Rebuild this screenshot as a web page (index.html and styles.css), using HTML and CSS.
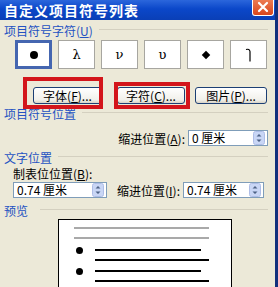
FILE: index.html
```html
<!DOCTYPE html>
<html lang="zh">
<head>
    <meta charset="UTF-8">
    <title>自定义项目符号列表</title>
    <link rel="stylesheet" href="styles.css">
</head>
<body>
    <div class="window">
        <div class="titlebar">
            <span class="title">自定义项目符号列表</span>
            <span class="close">
                <svg viewBox="0 0 20 15" width="20" height="15">
                    <path d="M6 3l8 8M14 3l-8 8" stroke="#fff" stroke-width="2.2" stroke-linecap="round"/>
                </svg>
            </span>
        </div>

        <div class="content">
            <div class="group-label"><span>项目符号字符(<u>U</u>)</span></div>

            <div class="bullets">
                <div class="bullet-box selected"><span class="dot"></span></div>
                <div class="bullet-box"><span class="glyph">λ</span></div>
                <div class="bullet-box"><span class="glyph">ν</span></div>
                <div class="bullet-box"><span class="glyph">υ</span></div>
                <div class="bullet-box"><span class="diamond"></span></div>
                <div class="bullet-box">
                    <svg viewBox="0 0 10 16" width="10" height="16">
                        <path d="M2 2.5q3.5-1 4 2v10" fill="none" stroke="#000" stroke-width="1.2"/>
                    </svg>
                </div>
            </div>

            <div class="button-row">
                <button class="btn btn-font">字体(<u>F</u>)...</button>
                <button class="btn btn-char">字符(<u>C</u>)...</button>
                <button class="btn btn-pic">图片(<u>P</u>)...</button>
                <span class="mark mark-font"></span>
                <span class="mark mark-char"></span>
            </div>

            <div class="group-label gl-pos"><span>项目符号位置</span></div>

            <div class="field-row row-a">
                <span class="field-label">缩进位置(<u>A</u>):</span>
                <div class="spin-input wide">
                    <span>0 厘米</span>
                    <svg class="spin" viewBox="0 0 12 14" width="12" height="14">
                        <rect x="0.5" y="0.5" width="11" height="13" rx="2" fill="#c9d6f5" stroke="#aebde6"/>
                        <path d="M3.5 5.5l2.5-2.5 2.5 2.5zM3.5 8.5l2.5 2.5 2.5-2.5z" fill="#4d6185"/>
                    </svg>
                </div>
            </div>

            <div class="group-label gl-text"><span>文字位置</span></div>
            <div class="sub-label">制表位位置(<u>B</u>):</div>

            <div class="field-row row-b">
                <div class="spin-input tab">
                    <span>0.74 厘米</span>
                    <svg class="spin" viewBox="0 0 12 14" width="12" height="14">
                        <rect x="0.5" y="0.5" width="11" height="13" rx="2" fill="#c9d6f5" stroke="#aebde6"/>
                        <path d="M3.5 5.5l2.5-2.5 2.5 2.5zM3.5 8.5l2.5 2.5 2.5-2.5z" fill="#4d6185"/>
                    </svg>
                </div>
                <span class="field-label">缩进位置(<u>I</u>):</span>
                <div class="spin-input indent">
                    <span>0.74 厘米</span>
                    <svg class="spin" viewBox="0 0 12 14" width="12" height="14">
                        <rect x="0.5" y="0.5" width="11" height="13" rx="2" fill="#c9d6f5" stroke="#aebde6"/>
                        <path d="M3.5 5.5l2.5-2.5 2.5 2.5zM3.5 8.5l2.5 2.5 2.5-2.5z" fill="#4d6185"/>
                    </svg>
                </div>
            </div>

            <div class="group-label gl-preview"><span>预览</span></div>

            <div class="preview">
                <div class="pv-rule"></div>
                <div class="pv-rule"></div>
                <div class="pv-item"><span class="pv-dot"></span><span class="pv-line"></span></div>
                <div class="pv-line long"></div>
                <div class="pv-item"><span class="pv-dot"></span><span class="pv-line"></span></div>
                <div class="pv-line long"></div>
            </div>
        </div>
    </div>
</body>
</html>
```

FILE: styles.css
```css
html, body {
    margin: 0;
    padding: 0;
    overflow: hidden;
}

body {
    width: 278px;
    height: 287px;
    background: #ece9d8;
    font-family: "Noto Sans CJK SC", "Liberation Sans", sans-serif;
    font-size: 12px;
    color: #000;
}

.window {
    width: 275px;
    height: 287px;
    border-right: 3px solid #12307c;
    background: #ece9d8;
    overflow: hidden;
}

.titlebar {
    height: 20px;
    display: flex;
    justify-content: space-between;
    align-items: flex-start;
    padding: 0 1px 0 4px;
    background: linear-gradient(#2b66dc, #0b47c9 45%, #0a3fb6);
}

.title {
    color: #fff;
    font-weight: bold;
    font-size: 14px;
    line-height: 20px;
    letter-spacing: 1px;
}

.close {
    width: 20px;
    height: 15px;
    border: 1px solid #fff;
    border-top: none;
    border-radius: 0 0 3px 3px;
    background: linear-gradient(#ec7a52, #d9461c);
    display: flex;
}

.content {
    padding: 0 7px 0 4px;
}

u {
    text-decoration: underline;
}

.group-label {
    display: flex;
    align-items: center;
    height: 12px;
    line-height: 12px;
    color: #2452c2;
    margin-top: 5px;
}

.group-label::after {
    content: "";
    flex: 1;
    height: 1px;
    margin-left: 6px;
    margin-top: -3px;
    background: #d4d0c0;
}

.bullets {
    display: flex;
    gap: 6px;
    margin-top: 3px;
    padding-left: 11px;
}

.bullet-box {
    width: 35px;
    height: 27px;
    background: #fff;
    border: 1px solid #a7a6a0;
    display: flex;
    align-items: center;
    justify-content: center;
}

.bullet-box.selected {
    width: 31px;
    height: 23px;
    border: 3px solid #4566b0;
}

.dot {
    width: 8px;
    height: 8px;
    border-radius: 50%;
    background: #000;
}

.glyph {
    font-family: "DejaVu Serif", serif;
    font-size: 13px;
    line-height: 13px;
}

.diamond {
    width: 6px;
    height: 6px;
    background: #000;
    transform: rotate(45deg);
}

.button-row {
    position: relative;
    display: flex;
    margin-top: 18px;
    padding-left: 29px;
}

.btn {
    height: 17px;
    padding: 0;
    border: 1px solid #1c3f74;
    border-radius: 3px;
    background: linear-gradient(#ffffff, #f1f0ea 80%, #d8d3c6);
    font-family: inherit;
    font-size: 12px;
    line-height: 14px;
    color: #000;
}

.btn-font {
    width: 69px;
}

.btn-char {
    width: 68px;
    margin-left: 15px;
}

.btn-pic {
    width: 72px;
    margin-left: 10px;
}

/* red annotation boxes drawn over the dialog */
.mark {
    position: absolute;
    border: 4px solid #d3151b;
    box-sizing: border-box;
}

.mark-font {
    left: 19px;
    top: -10px;
    width: 80px;
    height: 32px;
}

.mark-char {
    left: 110px;
    top: -5px;
    width: 76px;
    height: 27px;
}

.gl-pos {
    margin-top: 4px;
}

.field-row {
    display: flex;
    align-items: center;
    height: 16px;
}

.row-a {
    justify-content: flex-end;
    margin-top: 10px;
}

.field-label {
    white-space: nowrap;
}

.row-a .field-label {
    margin-right: 3px;
}

.spin-input {
    height: 14px;
    border: 1px solid #7f9db9;
    background: #fff;
    display: flex;
    align-items: center;
    justify-content: space-between;
    padding: 0 2px 0 3px;
    line-height: 14px;
}

.spin-input.wide {
    width: 73px;
}

.spin-input.tab {
    width: 87px;
    margin-left: 9px;
}

.spin-input.indent {
    width: 74px;
    margin-left: 3px;
}

.row-b .field-label {
    margin-left: 10px;
}

.gl-text {
    margin-top: 6px;
}

.sub-label {
    height: 12px;
    line-height: 12px;
    margin-top: 4px;
    padding-left: 9px;
}

.row-b {
    margin-top: 2px;
}

.gl-preview {
    margin-top: 7px;
}

.gl-preview::after {
    margin-left: 12px;
}

.preview {
    width: 157px;
    height: 80px;
    margin: 2px 0 0 54px;
    border: 1px solid #000;
    background: #fff;
    padding: 7px 0 0 15px;
}

.pv-rule {
    width: 135px;
    height: 2px;
    background: #a9a9a9;
    margin-bottom: 8px;
}

.pv-item {
    display: flex;
    align-items: center;
    height: 8px;
    margin-top: -1px;
}

.pv-dot {
    width: 7px;
    height: 7px;
    border-radius: 50%;
    background: #000;
    margin-left: 2px;
}

.pv-line {
    width: 106px;
    height: 2px;
    background: #000;
    margin-left: 12px;
}

.pv-line.long {
    width: 114px;
    margin: 5px 0 7px 21px;
}
```
